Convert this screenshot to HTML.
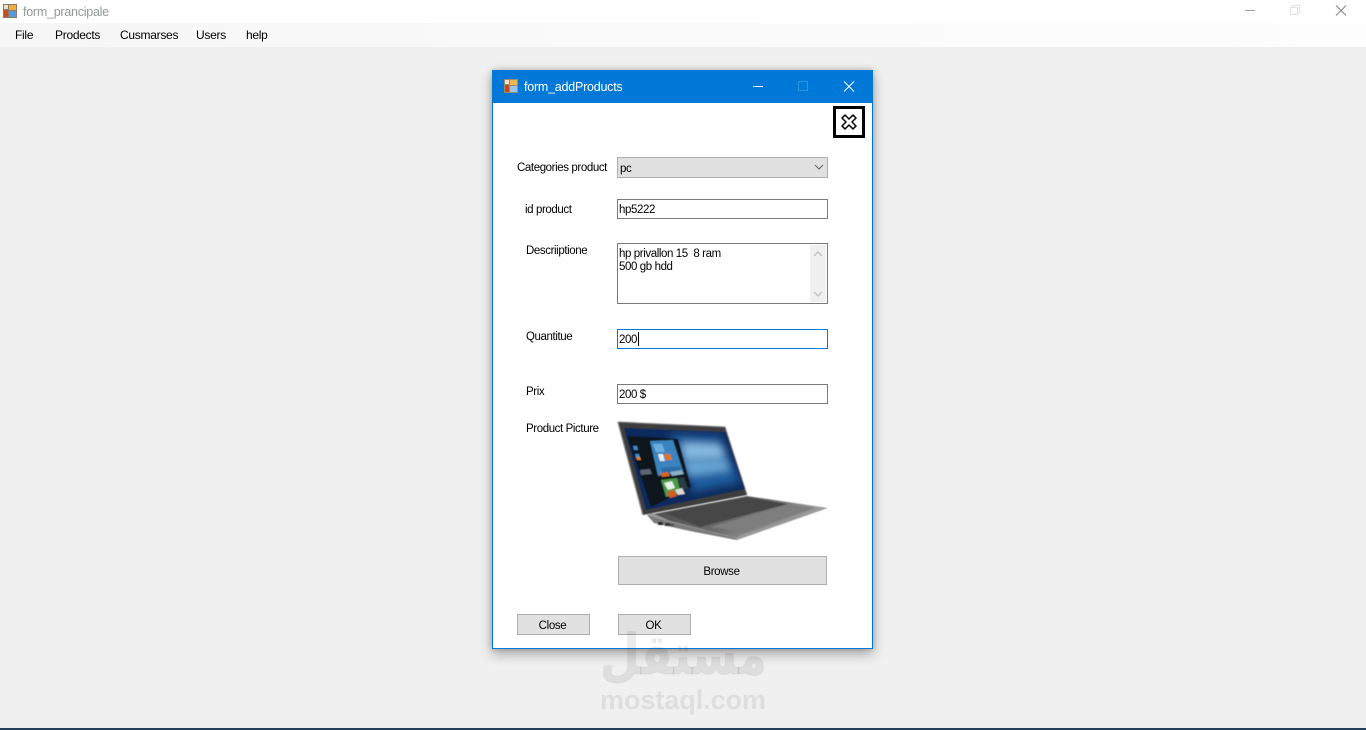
<!DOCTYPE html>
<html>
<head>
<meta charset="utf-8">
<style>
html,body{margin:0;padding:0;width:1366px;height:730px;overflow:hidden;background:#f0f0f0;font-family:"Liberation Sans",sans-serif;font-size:12px;color:#000}
.a{position:absolute;white-space:pre}
.l{position:absolute;white-space:pre;font-size:11.5px;line-height:14px;letter-spacing:-.4px;margin-top:1px}
.box{position:absolute;box-sizing:border-box;background:#fff;border:1px solid #7a7a7a;font-size:11.5px;line-height:13px;padding:2px 1px;letter-spacing:-.4px;white-space:pre}
.btn{position:absolute;box-sizing:border-box;background:#e1e1e1;border:1px solid #adadad;text-align:center;font-size:11.5px;letter-spacing:-.35px}
.m{position:absolute;top:28px;font-size:12px;line-height:14px;letter-spacing:-.28px}
</style>
</head>
<body>
<!-- Main title bar -->
<div class="a" style="left:0;top:0;width:1366px;height:23px;background:#fff"></div>
<svg class="a" style="left:3px;top:4px" width="14" height="14" viewBox="0 0 14 14">
<rect x="0" y="0" width="14" height="14" fill="#8a7a6a"/>
<rect x="6" y="1" width="7" height="5" fill="#f0b040"/>
<rect x="1" y="6" width="4" height="7" fill="#c85020"/>
<rect x="6" y="7" width="7" height="6" fill="#5a9ad8"/>
<rect x="1" y="1" width="4" height="4" fill="#e8e0d0"/>
</svg>
<div class="a" style="left:23px;top:5px;font-size:12.5px;line-height:14px;color:#8f9a96;letter-spacing:-.25px">form_prancipale</div>
<svg class="a" style="left:1240px;top:0" width="126" height="23" viewBox="0 0 126 23">
<path d="M5 10.500H15" stroke="#9a9a9a" stroke-width="1" fill="none"/>
<rect x="50.500" y="7.500" width="7" height="7" fill="#fff" stroke="#e2e2e2"/>
<path d="M52.500 7.500v-2h7v7h-2" stroke="#e2e2e2" fill="none"/>
<path d="M96 5.500L106 15.500M106 5.500L96 15.500" stroke="#808080" stroke-width="1" fill="none"/>
</svg>
<!-- Menu -->
<div class="a" style="left:0;top:23px;width:1366px;height:24px;background:linear-gradient(90deg,#f6f6f6,#fbfbfb 60%,#fdfdfd)"></div>
<div class="m" style="left:15px">File</div>
<div class="m" style="left:55px">Prodects</div>
<div class="m" style="left:120px">Cusmarses</div>
<div class="m" style="left:196px">Users</div>
<div class="m" style="left:246px">help</div>

<!-- Dialog -->
<div class="a" style="left:492px;top:70px;width:381px;height:579px;box-sizing:border-box;background:#fff;border:1px solid #0078d7;box-shadow:0 5px 12px rgba(0,0,0,.3),0 0 6px rgba(0,0,0,.2)"></div>
<div class="a" style="left:492px;top:70px;width:381px;height:33px;background:#0078d7"></div>
<svg class="a" style="left:504px;top:79px" width="14" height="14" viewBox="0 0 14 14">
<rect x="0" y="0" width="14" height="14" fill="#a08a70"/>
<rect x="6" y="1" width="7" height="5" fill="#f2b850"/>
<rect x="1" y="6" width="4" height="7" fill="#c84a18"/>
<rect x="6" y="7" width="7" height="6" fill="#9cc4e8"/>
<rect x="1" y="1" width="4" height="4" fill="#ece4d4"/>
</svg>
<div class="a" style="left:524px;top:80px;color:#fff;font-size:12.5px;line-height:15px;letter-spacing:-.23px">form_addProducts</div>
<svg class="a" style="left:750px;top:78px" width="110" height="18" viewBox="0 0 110 18">
<path d="M3 8.500H13" stroke="#fff" fill="none"/>
<rect x="48.500" y="3.500" width="9" height="9" fill="none" stroke="#3f9be3" stroke-dasharray="1.500 .5"/>
<path d="M94 3.500L104 13.500M104 3.500L94 13.500" stroke="#fff" fill="none"/>
</svg>

<!-- Close icon button -->
<div class="a" style="left:833px;top:106px;width:32px;height:32px;box-sizing:border-box;border:3px solid #000;background:#fff"></div>
<svg class="a" style="left:839px;top:112px" width="20" height="20" viewBox="0 0 20 20">
<path d="M6 3L10 7L14 3L17 6L13 10L17 14L14 17L10 13L6 17L3 14L7 10L3 6Z" fill="#fff" stroke="#000" stroke-width="1.500" stroke-linejoin="round"/>
</svg>

<!-- Labels -->
<div class="l" style="left:517px;top:160px">Categories product</div>
<div class="l" style="left:525px;top:202px">id product</div>
<div class="l" style="left:526px;top:243px">Descriiptione</div>
<div class="l" style="left:526px;top:329px">Quantitue</div>
<div class="l" style="left:526px;top:384px">Prix</div>
<div class="l" style="left:526px;top:421px">Product Picture</div>

<!-- Combo -->
<div class="box" style="left:617px;top:157px;width:211px;height:21px;background:#e1e1e1;border-color:#adadad;padding:5px 2px 0">pc</div>
<svg class="a" style="left:813px;top:163px" width="12" height="9" viewBox="0 0 12 9"><path d="M2 2L6 6L10 2" fill="none" stroke="#666" stroke-width="1.100"/></svg>

<!-- Inputs -->
<div class="box" style="left:617px;top:199px;width:211px;height:20px;padding:4px 1px 0">hp5222</div>
<div class="box" style="left:617px;top:243px;width:211px;height:61px;padding:4px 1px 0">hp privallon 15  8 ram
500 gb hdd</div>
<div class="a" style="left:810px;top:245px;width:16px;height:57px;background:#f0f0f0"></div>
<svg class="a" style="left:810px;top:245px" width="16" height="57" viewBox="0 0 16 57">
<path d="M4 11L8 7L12 11" fill="none" stroke="#c4c4c4" stroke-width="1.500"/>
<path d="M4 47L8 51L12 47" fill="none" stroke="#c4c4c4" stroke-width="1.500"/>
</svg>
<div class="box" style="left:617px;top:329px;width:211px;height:20px;padding:4px 1px 0;border-color:#0078d7">200</div>
<div class="a" style="left:638px;top:332px;width:1px;height:14px;background:#000"></div>
<div class="box" style="left:617px;top:384px;width:211px;height:20px;padding:4px 1px 0">200 $</div>

<!-- Laptop -->
<svg class="a" style="left:610px;top:410px" width="230" height="140" viewBox="0 0 230 140">
<defs>
<linearGradient id="b" x1="0" y1="0" x2="1" y2=".4">
<stop offset="0" stop-color="#444"/><stop offset=".6" stop-color="#6a6a6a"/><stop offset="1" stop-color="#a8a8a8"/>
</linearGradient>
<filter id="s"><feGaussianBlur stdDeviation=".55"/></filter>
<filter id="g"><feGaussianBlur stdDeviation="4"/></filter>
<clipPath id="sc"><polygon points="14,18 116,22 135,79 36,100"/></clipPath>
</defs>
<g filter="url(#s)">
<polygon points="8,12 115,17 137,85 33,105" fill="#3c3c3c"/>
<path d="M8 12L115 17L137 85" fill="none" stroke="#7a7a7a" stroke-width="1"/>
<path d="M8 12L33 105" fill="none" stroke="#777" stroke-width="1.200"/>
<polygon points="14,18 116,22 135,79 36,100" fill="#0d2c5e"/>
<g clip-path="url(#sc)"><g filter="url(#g)">
<polygon points="60,24 110,26 130,72 84,82" fill="#1a5c9e"/>
<polygon points="72,33 110,35 115,47 74,49" fill="#86bbe0"/>
<polygon points="72,52 116,50 120,60 78,66" fill="#68a6d4"/>
</g></g>
<polygon points="17,26 40,27 68,29 81,77 41,97" fill="#11151c"/>
<polygon points="40,31 63,30 73,61 48,66" fill="#3a83bf"/>
<polygon points="43,34 52,34 55,42 46,42" fill="#6bb0de"/>
<polygon points="54,44 60,44 62,50 56,50" fill="#e0761e"/>
<polygon points="48,44 53,44 55,51 50,51" fill="#e8eef2"/>
<polygon points="51,58 70,56 73,63 53,65" fill="#2a6ea8"/>
<polygon points="50,63 58,62 60,66 52,67" fill="#d8661e"/>
<polygon points="60,62 72,60 74,64 62,66" fill="#8ab0c8"/>
<polygon points="51,70 67,68 71,83 56,87" fill="#4a9a4a"/>
<polygon points="54,73 62,71 65,78 58,80" fill="#e8f0e8"/>
<polygon points="67,68 74,67 78,79 72,81" fill="#2a3a44"/>
<polygon points="57,82 64,80 67,86 60,88" fill="#d85a20"/>
<polygon points="65,80 72,78 75,84 68,85" fill="#dadada"/>
<polygon points="23,36 27,36 28,40 24,40" fill="#3a8ad0"/>
<polygon points="25,44 29,44 30,48 26,48" fill="#3a8ad0"/>
<polygon points="26,47 30,47 31,50 27,50" fill="#e08030"/>
<polygon points="30,60 40,59 42,64 31,65" fill="#5a6672"/>
<polygon points="38,105 137,86 218,98 127,128 60,112" fill="url(#b)"/>
<polygon points="55,103 137,87 178,94 90,117" fill="#474747"/>
<polygon points="100,117 178,95 205,98 135,122" fill="#7e7e7e"/>
<polygon points="37,105 42,103 60,111 127,128 130,125 218,98 127,130 80,121 44,113" fill="#9a9a9a"/>
<polygon points="37,105 44,113 80,121 127,130 125,128 60,112" fill="#7a7a7a"/>
<rect x="48" y="112" width="5" height="3" fill="#222"/>
<rect x="55" y="113" width="5" height="3" fill="#333"/>
<rect x="60" y="114" width="4" height="2" fill="#444"/>
</g>
</svg>

<!-- Buttons -->
<div class="btn" style="left:618px;top:556px;width:209px;height:29px;line-height:31px;padding-right:2px">Browse</div>
<div class="btn" style="left:517px;top:614px;width:73px;height:21px;line-height:23px;padding-right:2px">Close</div>
<div class="btn" style="left:618px;top:614px;width:73px;height:21px;line-height:22px;padding-right:2px">OK</div>

<!-- Watermark -->
<div class="a" style="left:600px;top:624px;height:64px;transform:scaleX(.815);transform-origin:0 0;font-family:'DejaVu Sans',sans-serif;font-weight:bold;font-size:56px;line-height:64px;color:rgba(0,0,0,.075);-webkit-text-stroke:1.500px rgba(0,0,0,.03)">مستقل</div>
<div class="a" style="left:600px;top:684px;font-family:'Liberation Sans',sans-serif;font-weight:bold;font-size:27px;line-height:32px;letter-spacing:-.05px;color:rgba(0,0,0,.075)">mostaql.com</div>

<!-- Bottom edge -->
<div class="a" style="left:0;top:728px;width:1366px;height:2px;background:#22405a"></div>
</body>
</html>
